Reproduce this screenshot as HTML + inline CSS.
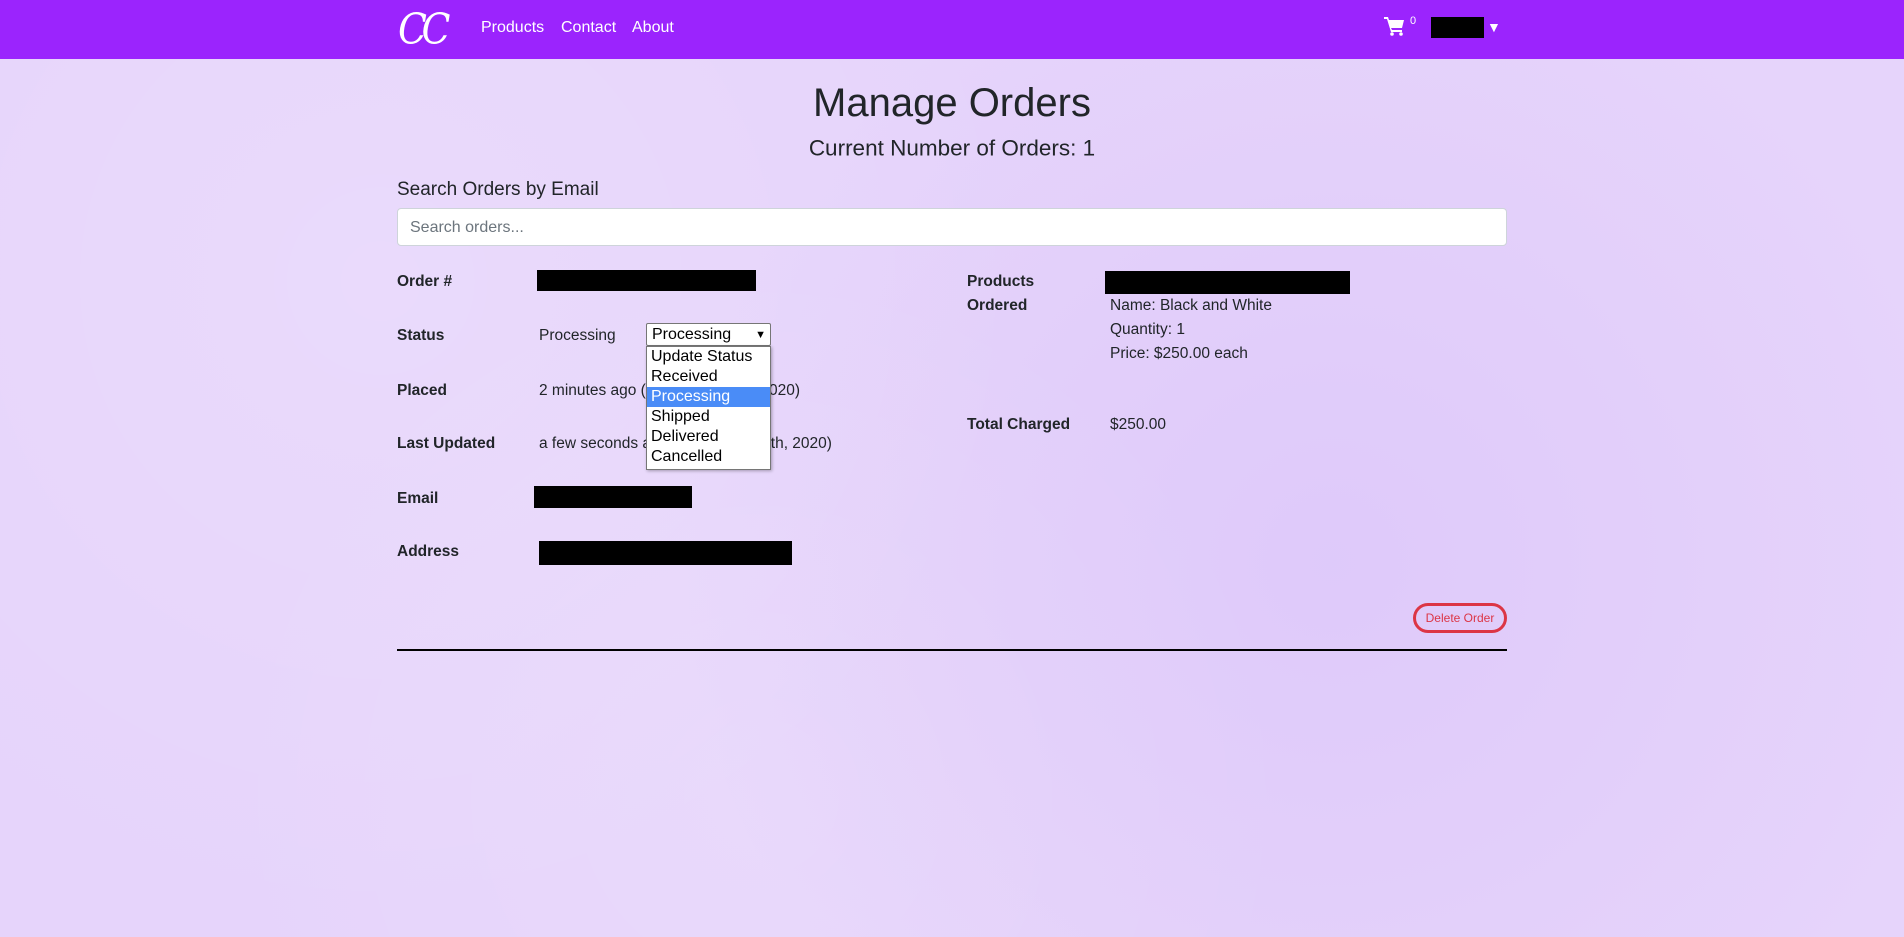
<!DOCTYPE html>
<html><head><meta charset="utf-8"><style>
*{box-sizing:border-box;margin:0;padding:0}
body{width:1904px;height:937px;overflow:hidden;background:#e6d4fb;font-family:"Liberation Sans",sans-serif;color:#212529;font-size:15.5px;position:relative;
background-image:radial-gradient(circle at 20% 30%,rgba(255,255,255,.15),transparent 40%),radial-gradient(circle at 70% 60%,rgba(200,170,245,.25),transparent 45%),radial-gradient(circle at 40% 85%,rgba(255,255,255,.12),transparent 40%);}
.nav{position:absolute;left:0;top:0;width:1904px;height:59px;background:#9b24fd}
.a{position:absolute;white-space:nowrap}
.c{transform:translateY(-45%)}
.lbl{font-weight:bold}
.blk{position:absolute;background:#000}
.nl{color:#fff;font-size:16px}
</style></head><body>
<div class="nav"></div>
<div class="a c" style="left:398px;top:29px;color:#fff;font-family:'DejaVu Serif','Liberation Serif',serif;font-style:italic;font-weight:200;font-size:42px;letter-spacing:-6px;transform:translateY(-50%) scaleX(.9);transform-origin:left">CC</div>
<div class="a c nl" style="left:481px;top:27px">Products</div>
<div class="a c nl" style="left:561px;top:27px">Contact</div>
<div class="a c nl" style="left:632px;top:27px">About</div>
<svg class="a" style="left:1384px;top:16px" width="21" height="20" viewBox="0 0 21 20"><path d="M0 1h4l1 3h15l-2 8H7l1 2h10v2H7L3 3H0z" fill="#fff"/><circle cx="8" cy="18" r="1.8" fill="#fff"/><circle cx="17" cy="18" r="1.8" fill="#fff"/></svg>
<div class="a" style="left:1410px;top:15px;color:#fff;font-size:11px">0</div>
<div class="blk" style="left:1431px;top:17px;width:53px;height:21px"></div>
<div class="a" style="left:1487px;top:19px;color:#fff;font-size:14px">▼</div>

<div class="a c" style="left:0;width:1904px;text-align:center;top:101px;font-size:40px">Manage Orders</div>
<div class="a c" style="left:0;width:1904px;text-align:center;top:147px;font-size:22.5px">Current Number of Orders: 1</div>
<div class="a c" style="left:397px;top:189px;font-size:19px">Search Orders by Email</div>
<div class="a" style="left:397px;top:208px;width:1110px;height:38px;background:#fff;border:1px solid #ced4da;border-radius:4px;padding:0 12px;line-height:37px;color:#6c757d;font-size:16px">Search orders...</div>

<div class="a c lbl" style="left:397px;top:281px">Order #</div>
<div class="blk" style="left:537px;top:270px;width:219px;height:21px"></div>
<div class="a c lbl" style="left:397px;top:335px">Status</div>
<div class="a c" style="left:539px;top:335px">Processing</div>
<div class="a c lbl" style="left:397px;top:390px">Placed</div>
<div class="a c" style="left:539px;top:390px">2 minutes ago (December 12th, 2020)</div>
<div class="a c lbl" style="left:397px;top:443px">Last Updated</div>
<div class="a c" style="left:539px;top:443px">a few seconds ago (December 12th, 2020)</div>
<div class="a c lbl" style="left:397px;top:498px">Email</div>
<div class="blk" style="left:534px;top:486px;width:158px;height:22px"></div>
<div class="a c lbl" style="left:397px;top:551px">Address</div>
<div class="blk" style="left:539px;top:541px;width:253px;height:24px"></div>

<div class="a" style="left:646px;top:323px;width:125px;height:23px;background:#fff;border:1px solid #767676;border-radius:2px;padding-left:5px;line-height:22px;font-size:16px;color:#000">Processing<span style="position:absolute;right:4px;top:0;font-size:11px">&#9660;</span></div>
<div class="a" style="left:646px;top:346px;width:125px;height:124px;background:#fff;border:1px solid #767676;color:#000;font-size:16px;line-height:20px;box-shadow:1px 1px 3px rgba(0,0,0,.3)">
<div style="padding-left:4px">Update Status</div><div style="padding-left:4px">Received</div><div style="padding-left:4px;background:#4a8cf7;color:#fff">Processing</div><div style="padding-left:4px">Shipped</div><div style="padding-left:4px">Delivered</div><div style="padding-left:4px">Cancelled</div></div>

<div class="a c lbl" style="left:967px;top:281px">Products</div>
<div class="a c lbl" style="left:967px;top:305px">Ordered</div>
<div class="blk" style="left:1105px;top:271px;width:245px;height:23px"></div>
<div class="a c" style="left:1110px;top:305px">Name: Black and White</div>
<div class="a c" style="left:1110px;top:329px">Quantity: 1</div>
<div class="a c" style="left:1110px;top:353px">Price: $250.00 each</div>
<div class="a c lbl" style="left:967px;top:424px">Total Charged</div>
<div class="a c" style="left:1110px;top:424px">$250.00</div>

<div class="a" style="left:1413px;top:603px;width:94px;height:30px;border:3px solid #dc3545;border-radius:15px;color:#dc3545;font-size:12px;text-align:center;line-height:24px">Delete Order</div>
<div class="blk" style="left:397px;top:649px;width:1110px;height:2px"></div>
</body></html>
